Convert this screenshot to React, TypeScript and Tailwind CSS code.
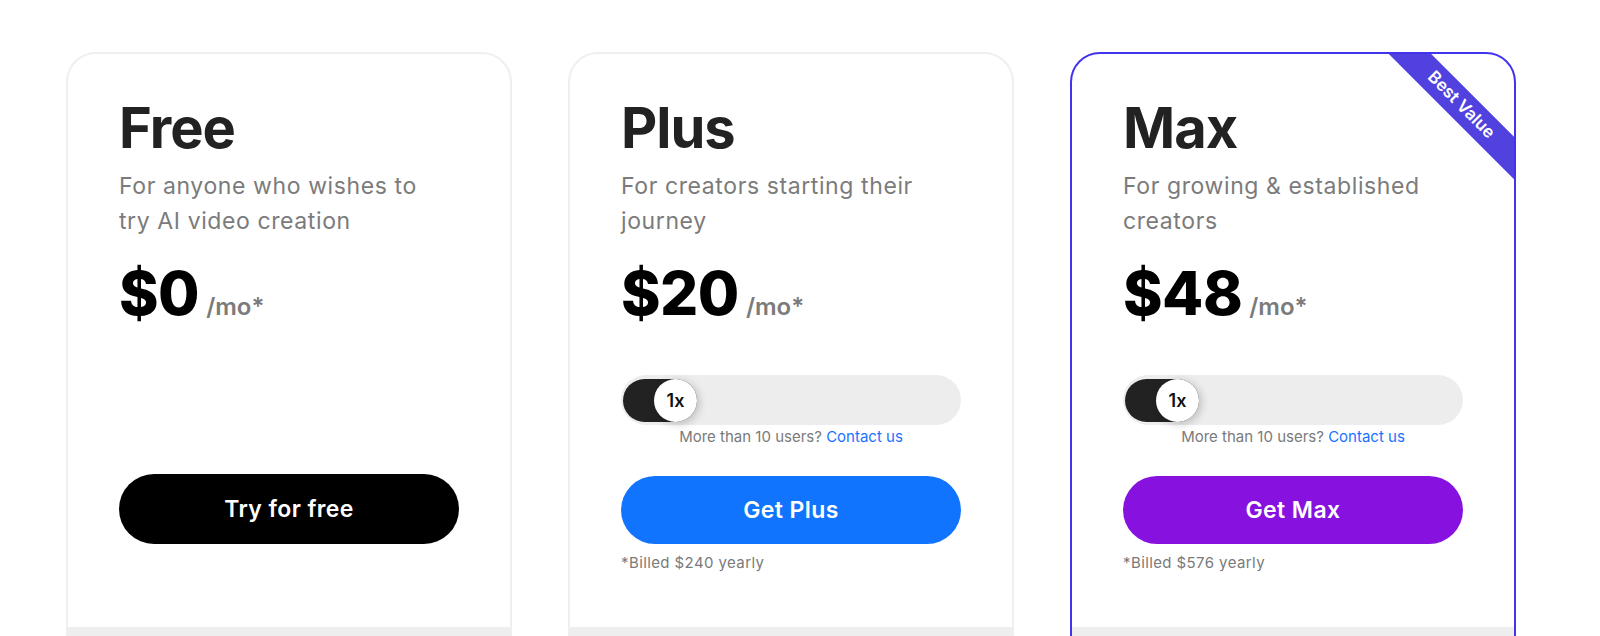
import React from 'react';

type Plan = {
  name: string;
  lines: string[];
  price: string;
  cta: string;
  btnClass: string;
  billed?: string;
  featured?: boolean;
};

const plans: Plan[] = [
  {
    name: 'Free',
    lines: ['For anyone who wishes to', 'try AI video creation'],
    price: '$0',
    cta: 'Try for free',
    btnClass: 'bg-black',
  },
  {
    name: 'Plus',
    lines: ['For creators starting their', 'journey'],
    price: '$20',
    cta: 'Get Plus',
    btnClass: 'bg-[#1174fe]',
    billed: '*Billed $240 yearly',
  },
  {
    name: 'Max',
    lines: ['For growing & established', 'creators'],
    price: '$48',
    cta: 'Get Max',
    btnClass: 'bg-[#8711df]',
    billed: '*Billed $576 yearly',
    featured: true,
  },
];

const UserSlider: React.FC = () => (
  <div className="mt-[50px]">
    <div className="h-[50px] rounded-full bg-[#ededed] p-[3px] pl-[2px] flex items-center">
      <div className="relative h-[43px] w-[74px] rounded-full bg-[#222222]">
        <div className="absolute right-0 top-0 h-[43px] w-[43px] rounded-full bg-white shadow-[2px_2px_8px_rgba(0,0,0,0.22)] flex items-center justify-center text-[18px] font-semibold text-[#111]">
          1x
        </div>
      </div>
    </div>
    <p className="mt-[2px] text-center text-[15px] leading-[20px] text-[#7a7a7a]">
      More than 10 users? <a className="text-[#1a73ff]">Contact us</a>
    </p>
  </div>
);

const PlanCard: React.FC<{ plan: Plan }> = ({ plan }) => (
  <div
    className={`relative w-[446px] h-[700px] shrink-0 overflow-hidden rounded-[30px] border-2 bg-white flex flex-col ${
      plan.featured ? 'border-[#4433ee]' : 'border-[#efefef]'
    }`}
  >
    {plan.featured && (
      <div className="absolute right-[-42px] top-[36px] h-[30px] w-[190px] rotate-45 bg-[#5142e0] flex items-center justify-center text-[17px] font-semibold text-white">
        Best Value
      </div>
    )}

    <div className="h-[573px] shrink-0 px-[51px] pt-[46px]">
      <h2 className="text-[56px] leading-none font-bold tracking-[-1px] text-[#222222]">{plan.name}</h2>
      <p className="mt-[13px] text-[23px] leading-[35px] tracking-[0.6px] text-[#7b7b7b]">
        {plan.lines[0]}
        <br />
        {plan.lines[1]}
      </p>
      <div className="mt-[24px] flex items-baseline">
        <span className="text-[60px] leading-none font-extrabold tracking-[-0.5px] text-black">{plan.price}</span>
        <span className="ml-[7px] text-[24px] font-semibold text-[#7b7b7b]">/mo*</span>
      </div>

      {plan.billed ? (
        <>
          <UserSlider />
          <button className={`mt-[29px] h-[68px] w-full rounded-full ${plan.btnClass} text-[23px] tracking-[0.4px] font-semibold text-white`}>
            {plan.cta}
          </button>
          <p className="mt-[9px] text-[15px] leading-[20px] tracking-[0.4px] text-[#7a7a7a]">{plan.billed}</p>
        </>
      ) : (
        <button className={`mt-[149px] h-[70px] w-full rounded-full ${plan.btnClass} text-[23px] tracking-[0.4px] font-semibold text-white`}>
          {plan.cta}
        </button>
      )}
    </div>

    <div className="flex-1 bg-[#eeeeee]" />
  </div>
);

const App: React.FC = () => {
  return (
    <div className="h-[636px] overflow-hidden bg-white font-['Inter','Liberation_Sans',sans-serif]">
      <div className="flex gap-[56px] pl-[66px] pt-[52px]">
        {plans.map((plan) => (
          <PlanCard key={plan.name} plan={plan} />
        ))}
      </div>
    </div>
  );
};

export default App;
